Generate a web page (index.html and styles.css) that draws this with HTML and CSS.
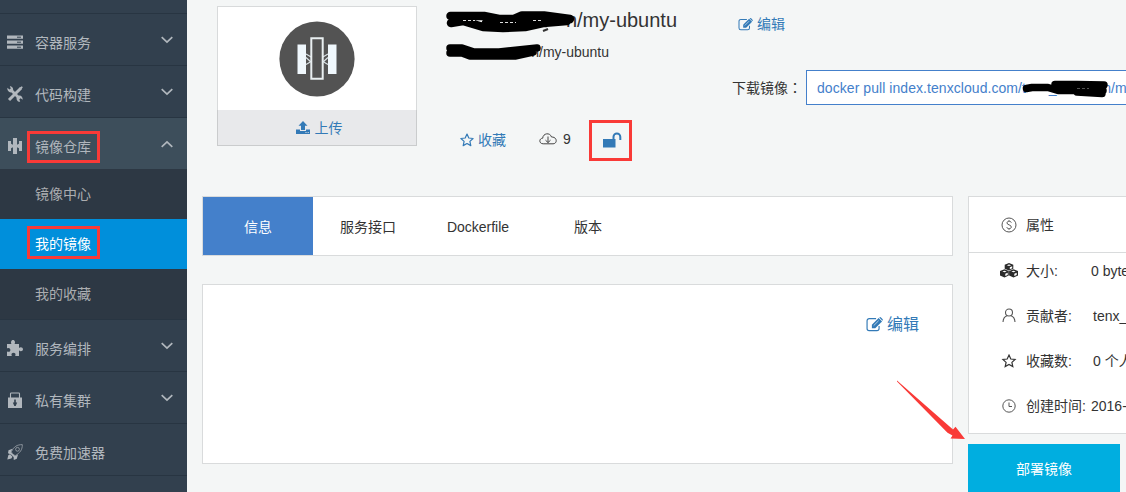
FILE: index.html
```html
<!DOCTYPE html>
<html lang="zh-CN">
<head>
<meta charset="utf-8">
<title>my-ubuntu</title>
<link rel="stylesheet" href="styles.css">
</head>
<body>
<svg class="defs" width="0" height="0" aria-hidden="true">
  <symbol id="chev" viewBox="0 0 12 8"><path d="M.7 1.2 6 6.2l5.3-5" fill="none" stroke="currentColor" stroke-width="1.7"/></symbol>
  <symbol id="star" viewBox="0 0 14 14"><path d="M7 1.1 8.8 5l4.3.5-3.2 2.9.9 4.2L7 10.5l-3.8 2.1.9-4.2L.9 5.5 5.2 5z" fill="none" stroke="currentColor" stroke-width="1.2" stroke-linejoin="round"/></symbol>
  <symbol id="edit" viewBox="0 0 16 14"><path d="M12.3 8.3v2.4a2 2 0 0 1-2 2H3a2 2 0 0 1-2-2V3.500a2 2 0 0 1 2-2h6.500" fill="none" stroke="currentColor" stroke-width="1.1"/><path d="M5.500 7.300 11.900.9 15.100 4.100 8.700 10.500H5.500z" fill="currentColor"/><path d="M12.500.5q.8-.9 1.600-.1l1.400 1.400q.8.8-.1 1.600z" fill="currentColor"/><path d="M7.200 8.100l4.700-4.700" stroke="#fff" stroke-width=".6"/></symbol>
</svg>
<div class="page">
  <nav class="sidebar">
    <div class="side-top"></div>
    <div class="item">
      <svg class="ico" viewBox="0 0 16 16"><path fill="currentColor" d="M0 1.500h16v3.300H0zm0 5h16v3.300H0zm0 5h16v3.300H0z"/><path d="M10 3.200h4M10 8.200h4M10 13.200h4" stroke="#32404e" stroke-width="1"/></svg>
      <span>容器服务</span><svg class="chev"><use href="#chev"/></svg>
    </div>
    <div class="item">
      <svg class="ico" viewBox="0 0 16 16"><path d="M4 4l8.500 8.500" stroke="currentColor" stroke-width="2.800"/><path d="M2 14 13.800 2.200" stroke="currentColor" stroke-width="3"/><path d="M.3 1.800 2.500 3.600 3.800 2.600 2.800.2C5.500.1 6.700 2.600 6 4.800L4.500 6.300C2.200 6.900.100 5 .3 1.800zM15.700 13.800l-2.100-1.500-1.300 1 .9 2.500c-2.700.2-4.200-2.100-3.400-4.500l1.700-1.600c2.500-.7 4.300 1.300 4.200 4.100zM12.500 1.700 14.800.2l1 1-1.500 2.400z" fill="currentColor"/></svg>
      <span>代码构建</span><svg class="chev"><use href="#chev"/></svg>
    </div>
    <div class="item open">
      <svg class="ico" viewBox="0 0 16 16"><path fill="currentColor" d="M1 3h3v2.800l2 1V0h4v6.800l2-1V3h3v10h-3v-2.800l-2-1V16H6V9.200l-2 1V13H1z"/></svg>
      <span>镜像仓库</span><svg class="chev up"><use href="#chev"/></svg>
      <i class="mark mark-repo"></i>
    </div>
    <div class="sub">
      <div class="sub-item">镜像中心</div>
      <div class="sub-item current">我的镜像<i class="mark mark-mine"></i></div>
      <div class="sub-item">我的收藏</div>
    </div>
    <div class="item">
      <svg class="ico" viewBox="0 0 16 16"><path fill="currentColor" d="M0 4h4.500C3.500 2.500 4.200 0 6 0s2.600 2.500 1.500 4H12v4c1.200-1.400 4-1 4 1.200s-2.800 2.600-4 1.100V16H8.200c1-2-.3-3.200-1.700-3.200S3.800 14 4.800 16H0v-4.600c1.700 1 3.400.1 3.400-1.500S1.700 7.400 0 8.400z"/></svg>
      <span>服务编排</span><svg class="chev"><use href="#chev"/></svg>
    </div>
    <div class="item">
      <svg class="ico" viewBox="0 0 16 16"><path d="M3.500 6V1.800Q3.500 1 4.300 1h7.400q.8 0 .8.800V6" fill="none" stroke="currentColor" stroke-width="1.100"/><path fill="currentColor" d="M1 5.500h14V16H1z"/><path d="M7.200 7.500h1.600v3h1.400L8.700 14H7.300l-1.500-3.500h1.400z" fill="#32404e"/></svg>
      <span>私有集群</span><svg class="chev"><use href="#chev"/></svg>
    </div>
    <div class="item">
      <svg class="ico" viewBox="0 0 16 16"><path d="M5 10 4.500 7.500C7 2.500 10 .7 15.300.6c.2 5-2.300 8.400-7.100 11z" fill="none" stroke="currentColor" stroke-width=".9" opacity=".75"/><circle cx="10.500" cy="5.300" r="1.900" fill="none" stroke="currentColor" stroke-width=".9" opacity=".75"/><path fill="currentColor" d="M1.500 6.300 5.500 4.700 3.800 8.300 8 12l3-1.500-1.200 4.200-3 1.200L6.600 13 4 10.500 1 9.300zM.3 15.600l1-4.300 1.600-1 2.600 2.500-1.200 1.700z"/></svg>
      <span>免费加速器</span>
    </div>
    <div class="side-rest"></div>
  </nav>

  <main class="main">
    <header class="head">
      <div class="card">
        <div class="card-pic">
          <svg width="76" height="76" viewBox="0 0 76 76"><circle cx="38" cy="38" r="37.600" fill="#535353"/><path d="M18.500 23.500h8.500v29.500h-8.500zM49 23.500h8.500v29.500H49z" fill="#f0f8fd"/><path d="M27 33l6 3.500M27 43.500l6-3.500M49 33l-6 3.500M49 43.500l-6-3.500M27 36.500l5 4.500M49 36.500l-5 4.500" fill="none" stroke="#d9e2e6" stroke-width="1.200"/><path d="M32.300 17.300h11.400v40.400H32.300z" fill="#535353" stroke="#e9eff1" stroke-width="2"/></svg>
        </div>
        <div class="card-foot link">
          <svg width="14" height="13" viewBox="0 0 14 13"><path fill="currentColor" d="M7 0l4.500 4.700H9V9H5V4.700H2.500zM0 8.500h4v1.600h6V8.500h4V13H0z"/><path d="M9.500 11.500h1M11.700 11.500h1" stroke="#e8eaeb"/></svg>
          <span>上传</span>
        </div>
      </div>
      <div class="info">
        <h1 class="title"><span class="owner">n</span>/my-ubuntu
          <svg class="ink" width="132" height="24" viewBox="0 0 132 24"><path d="M4.500 5H38l15 3h15l8-3.500h22l26 3.500M5 12l12-2 20 6 20 1 22-1 18-4 24-2M40 12h60" fill="none" stroke="#000" stroke-width="8.500" stroke-linecap="round" stroke-linejoin="round"/><path d="M97 20l5-2" stroke="#333" stroke-width="2"/><path d="M17 9.500h12M54 11.500h16M87 9.500h10" stroke="#ddd" stroke-width="1" stroke-dasharray="3 2"/></svg>
        </h1>
        <p class="desc"><span class="owner">n</span>/my-ubuntu
          <svg class="ink" width="96" height="20" viewBox="0 0 96 20"><path d="M4 5h12l12 4h25l38-4M4 10h12l8 3h45l18-4M24 13h30" fill="none" stroke="#000" stroke-width="7.500" stroke-linecap="round" stroke-linejoin="round"/></svg>
        </p>
        <div class="acts">
          <span class="fav link"><svg width="14" height="14"><use href="#star"/></svg><b>收藏</b></span>
          <span class="pulls"><svg width="18" height="12" viewBox="0 0 18 12"><path d="M4.200 10.800C-.2 10.800-.2 5.400 3.700 5.200 4 .1 11-.9 12.500 4c6-.2 6 6.800 1.500 6.800z" fill="none" stroke="#444"/><path d="M9 3.500v6M6.500 7.200 9 9.600l2.500-2.400" fill="none" stroke="#444"/></svg><b>9</b></span>
          <span class="lock link"><svg width="19" height="16" viewBox="0 0 19 16"><path d="M0 7h12.500v8.500H0z" fill="currentColor"/><path d="M10.500 7V4.800a3.400 3.400 0 0 1 6.800 0V8" fill="none" stroke="currentColor" stroke-width="2"/></svg></span>
        </div>
      </div>
      <div class="side-info">
        <div class="edit link"><svg width="15" height="13"><use href="#edit"/></svg><b>编辑</b></div>
        <div class="pull"><span class="pull-label">下载镜像<span class="colon" lang="zh-TW">：</span></span><div class="cmd">docker pull index.tenxcloud.com/<span class="cmd-owner"><span>t</span><span>_</span><span>n</span></span>/my-ubuntu
          <svg class="ink" width="88" height="18" viewBox="0 0 88 18"><path d="M4.500 8.500 10 7.500h16l10 3h45M33 4.500h22l27 .5M55 12l25 1.500" fill="none" stroke="#000" stroke-width="7.500" stroke-linecap="round" stroke-linejoin="round"/><path d="M55 8.500h12" stroke="#777" stroke-width=".7" stroke-dasharray="3 2"/></svg>
        </div></div>
      </div>
    </header>

    <div class="body">
      <div class="left">
        <div class="tabs"><div class="tab on">信息</div><div class="tab">服务接口</div><div class="tab">Dockerfile</div><div class="tab">版本</div></div>
        <section class="panel"><div class="panel-edit link"><svg width="17" height="15"><use href="#edit"/></svg><b>编辑</b></div></section>
      </div>
      <aside class="right">
        <div class="props">
          <div class="props-head"><svg width="16" height="16" viewBox="0 0 16 16" fill="none" stroke="#555"><circle cx="8" cy="8" r="7"/><path d="M10.300 5.600C9.800 3.700 6 3.700 6 6c0 2.200 4.300 1.500 4.300 4 0 2.200-4 2.200-4.600.2M8 3.300v1M8 11.700v1"/></svg><span>属性</span></div>
          <div class="prop"><svg width="18" height="15" viewBox="0 0 18 15"><path d="M9 0l4.300 1.700v4L9 7.500 4.700 5.700v-4zM4.500 6.200l4.300 1.800v4.500l-4.300 2-4.500-2V8zM13.500 6.200 18 8v4.500l-4.500 2-4.400-2V8z" fill="#2b2b2b"/><path d="M6.800 2.200 9 3l2.200-.8L9 1.400zM2.300 8.500l2.200.8 2.200-.8-2.200-.8zM11.300 8.500l2.200.8 2.200-.8-2.200-.8zM9.800 4.300v2L12.200 5.300v-2zM5.300 10.800v2.300l2.400-1.100V9.800zM14.300 10.800v2.300l2.400-1.100V9.800z" fill="#fff"/></svg><span class="key">大小:</span><span class="size">0 bytes</span></div>
          <div class="prop"><svg width="16" height="15" viewBox="0 0 16 15" fill="none" stroke="#555" stroke-width="1.100"><circle cx="8" cy="4.500" r="3.500"/><path d="M2 14q.3-5.200 4-6.300M14 14q-.3-5.200-4-6.300"/></svg><span class="key">贡献者:</span><span>tenx_tenxcloud</span></div>
          <div class="prop"><svg width="16" height="14" viewBox="-1 0 16 14" color="#333"><path d="M7 1.100 8.800 5l4.300.5-3.200 2.900.9 4.200L7 10.500l-3.800 2.100.9-4.200L.9 5.500 5.200 5z" fill="none" stroke="currentColor" stroke-width="1.200"/></svg><span class="key">收藏数:</span><span>0 个人</span></div>
          <div class="prop"><svg width="16" height="14" viewBox="0 0 16 14" fill="none" stroke="#555"><circle cx="8" cy="7" r="6.200"/><path d="M8 3.500V7.500h3"/></svg><span class="key">创建时间:</span><span class="date">2016-05-10</span></div>
        </div>
        <div class="deploy">部署镜像</div>
      </aside>
    </div>
  </main>
  <i class="mark mark-lock"></i>
  <svg class="arrow" width="70" height="60" viewBox="0 0 70 60"><path d="M1 .6 57 49.500 59.500 46.800 69 59 54.500 58.500 56.500 55.500 51.500 52.800 1 1.400z" fill="#f93a37"/></svg>
</div>
</body>
</html>
```
FILE: styles.css
```css
* { box-sizing: border-box; }
body { margin: 0; font: 14px/20px "Liberation Sans", "Noto Sans CJK SC", sans-serif; color: #333; }
b { font-weight: normal; }
svg { display: block; flex: none; }
.defs { position: absolute; }
.link { color: #337ab7; }
.page { position: relative; display: flex; width: 1126px; height: 492px; overflow: hidden; background: #f4f6f6; }

.sidebar { width: 187px; flex: none; background: #32404e; color: #b1b7bd; }
.side-top { height: 14px; border-bottom: 1px solid #283542; }
.item { position: relative; display: flex; align-items: center; height: 52px; padding: 7px 14px 0 7px; border-bottom: 1px solid #283542; }
.item .ico { width: 16px; height: 16px; margin: -2px 12px 0 0; }
.chev { width: 12px; height: 8px; margin: -7px 0 0 auto; }
.chev.up { transform: rotate(180deg); }
.open { background: #3d4e5b; border-bottom-color: #2d3844; }
.sub { height: 150px; background: #2d3844; border-bottom: 1px solid #283542; color: #abadb0; }
.sub-item { position: relative; height: 50px; padding-left: 35px; line-height: 50px; }
.sub-item:first-child { height: 49px; line-height: 48px; }
.current { background: #008fdb; color: #fff; }
.mark { position: absolute; border: 3px solid #f93a37; }
.mark-repo { left: 27px; top: 13px; width: 73px; height: 32px; }
.mark-mine { left: 27px; top: 7px; width: 73px; height: 33px; }
.mark-lock { left: 589px; top: 120px; width: 43px; height: 41px; }

.main { flex: none; width: 939px; padding-left: 15px; }
.head { display: flex; height: 196px; padding: 6px 0 0 15px; }
.card { width: 200px; height: 140px; border: 1px solid #d8dadb; background: #fff; flex: none; }
.card-pic { display: flex; justify-content: center; height: 103px; padding-top: 14px; }
.card-foot { display: flex; align-items: center; justify-content: center; gap: 5px; height: 36px; margin: 0 -1px -1px; padding-left: 4px; border: 1px solid #cacccd; border-top: 0; background: #e8e9eb; }
.info { width: 286px; flex: none; padding-left: 29px; }
.title { position: relative; margin: 0; font-size: 20px; font-weight: normal; line-height: 28px; }
.owner { display: inline-block; width: 131px; text-align: right; }
.desc { position: relative; margin: 8px 0 0; line-height: 20px; }
.desc .owner { width: 93px; }
.ink { position: absolute; left: 0; top: 5px; }
.desc .ink { top: 1px; }
.acts { display: flex; align-items: center; height: 40px; margin: 58px 0 0 14px; }
.fav { display: flex; align-items: center; gap: 4px; width: 79px; }
.pulls { display: flex; align-items: center; gap: 6px; width: 64px; margin-top: -2px; }
.side-info { width: 408px; padding-left: 29px; flex: none; }
.edit { display: flex; align-items: center; gap: 4px; height: 36px; padding-left: 6px; }
.pull { display: flex; align-items: center; margin-top: 28px; }
.pull-label { width: 74px; flex: none; white-space: nowrap; }
.colon { font-family: "Noto Sans CJK TC", sans-serif; }
.cmd { position: relative; width: 400px; height: 35px; flex: none; border: 1px solid #4480cb; background: #fff; color: #4480cb; padding-left: 10px; line-height: 35px; white-space: nowrap; letter-spacing: .06px; }
.cmd-owner { display: inline-flex; justify-content: space-between; width: 89px; }
.cmd-owner span:nth-child(2) { margin-right: 24px; }
.cmd .ink { left: 215px; top: 9px; }

.body { display: flex; gap: 15px; }
.left { width: 751px; flex: none; }
.tabs { display: flex; height: 60px; border: 1px solid #d9dbdc; background: #fff; line-height: 60px; }
.tab { width: 110px; text-align: center; }
.on { background: #4480cb; color: #fff; }
.panel { height: 180px; margin-top: 28px; border: 1px solid #d9dbdc; background: #fff; padding: 30px 33px 0 0; font-size: 16px; }
.panel-edit { display: flex; align-items: center; justify-content: flex-end; gap: 4px; }
.panel-edit svg { margin-top: -2px; }
.right { width: 173px; flex: none; }
.props { width: 188px; height: 238px; border: 1px solid #d9dbdc; background: #fff; white-space: nowrap; }
.props-head { display: flex; align-items: center; gap: 9px; height: 56px; padding-left: 32px; border-bottom: 1px solid #d9dbdc; }
.prop { display: flex; align-items: center; height: 45px; padding-left: 32px; }
.props-head + .prop { margin-top: -5px; }
.prop .key { width: 67px; flex: none; margin-left: 9px; }
.prop > svg[width="18"] { margin: 0 -1px; }
.size { margin-left: -2px; }
.date { margin-left: -2px; }
.deploy { width: 152px; height: 50px; margin-top: 10px; background: #00aee0; color: #fff; text-align: center; line-height: 51px; }
.arrow { position: absolute; left: 896px; top: 380px; }
```
